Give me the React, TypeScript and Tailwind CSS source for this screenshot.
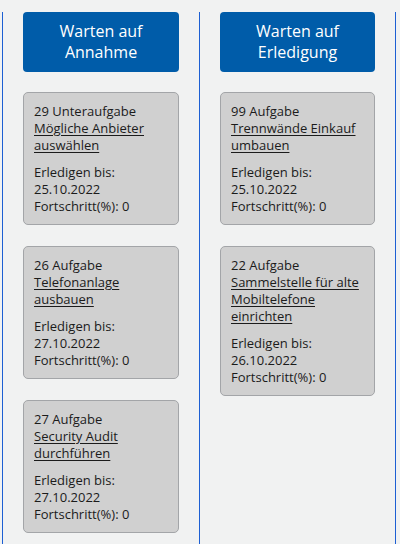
import React from "react";

type Card = { head: string; title: string[]; date: string };

const col1: Card[] = [
  { head: "29 Unteraufgabe", title: ["Mögliche Anbieter", "auswählen"], date: "25.10.2022" },
  { head: "26 Aufgabe", title: ["Telefonanlage", "ausbauen"], date: "27.10.2022" },
  { head: "27 Aufgabe", title: ["Security Audit", "durchführen"], date: "27.10.2022" },
];
const col2: Card[] = [
  { head: "99 Aufgabe", title: ["Trennwände Einkauf", "umbauen"], date: "25.10.2022" },
  { head: "22 Aufgabe", title: ["Sammelstelle für alte", "Mobiltelefone", "einrichten"], date: "26.10.2022" },
];

function TaskCard({ c }: { c: Card }) {
  return (
    <div className="rounded-[5px] border border-[#a3a5a8] bg-[#d0d0d0] px-[10px] pt-[10px] pb-[9px] text-[13px] leading-[17px] text-[#1b1b1b]">
      <div>{c.head}</div>
      <div className="underline underline-offset-2">
        {c.title.map((t, i) => (
          <div key={i}>{t}</div>
        ))}
      </div>
      <div className="mt-[10px]">
        <div>Erledigen bis:</div>
        <div>{c.date}</div>
        <div>Fortschritt(%): 0</div>
      </div>
    </div>
  );
}

function Column({ title, cards, last }: { title: string[]; cards: Card[]; last?: boolean }) {
  return (
    <div className={"w-[197px] border-l border-[#1d5fd3] px-5 " + (last ? "border-r" : "")}>
      <div className="flex h-[60px] flex-col items-center justify-center rounded-[4px] bg-[#005ca9] text-[16px] leading-[21px] text-white">
        {title.map((t, i) => (
          <div key={i}>{t}</div>
        ))}
      </div>
      <div className="mt-5 flex flex-col gap-[21px]">
        {cards.map((c, i) => (
          <TaskCard key={i} c={c} />
        ))}
      </div>
    </div>
  );
}

export default function App() {
  return (
    <div
      className="h-[544px] w-[400px] overflow-hidden bg-[#f1f2f2] pl-[2px] pt-[12px]"
      style={{ fontFamily: '"Open Sans", "Noto Sans", sans-serif' }}
    >
      <div className="flex h-[600px]">
        <Column title={["Warten auf", "Annahme"]} cards={col1} />
        <Column title={["Warten auf", "Erledigung"]} cards={col2} last />
      </div>
    </div>
  );
}
